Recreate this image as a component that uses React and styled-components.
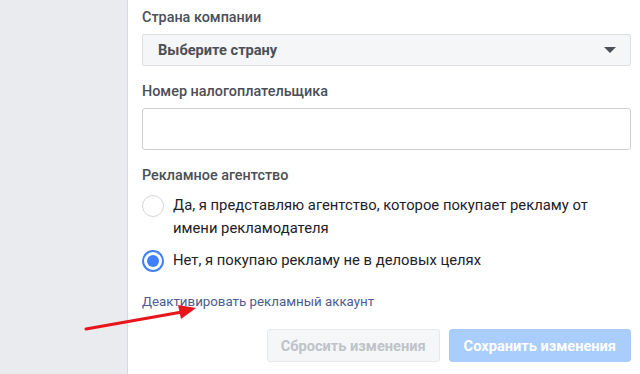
import React from "react";
import styled, { createGlobalStyle } from "styled-components";

const Global = createGlobalStyle`
  html, body { margin: 0; padding: 0; background: #fff; }
  body { font-family: Roboto, "Liberation Sans", Arial, sans-serif; }
  #root { width: 640px; height: 374px; overflow: hidden; }
`;

const Page = styled.div`
  position: relative;
  display: flex;
  width: 640px;
  height: 374px;
  overflow: hidden;
`;

const Sidebar = styled.div`
  width: 127px;
  flex: none;
  background: #e9ebee;
  border-right: 1px solid #d7dae0;
`;

const Content = styled.div`
  flex: 1;
  display: flex;
  flex-direction: column;
  padding: 9px 9px 0 14px;
`;

const Label = styled.div`
  font-size: 14.4px;
  line-height: 17px;
  font-weight: 500;
  color: #4b4f56;
  margin-bottom: ${(p) => p.$mb || 8}px;
`;

const Select = styled.div`
  height: 30px;
  display: flex;
  align-items: center;
  justify-content: space-between;
  padding: 0 14px 0 15px;
  background: #f5f6f7;
  border: 1px solid #dddfe2;
  border-radius: 2px;
  font-size: 14.6px;
  font-weight: 700;
  color: #4b4f56;
  margin-bottom: 17px;
`;

const Caret = styled.span`
  width: 0;
  height: 0;
  border-left: 6px solid transparent;
  border-right: 6px solid transparent;
  border-top: 6px solid #4b4f56;
`;

const Input = styled.div`
  height: 40px;
  background: #fff;
  border: 1px solid #ccd0d5;
  border-radius: 3px;
  margin-bottom: 17px;
`;

const RadioRow = styled.div`
  display: flex;
  align-items: flex-start;
  gap: 9px;
  margin-top: ${(p) => p.$mt || 0}px;
`;

const Radio = styled.span`
  flex: none;
  box-sizing: border-box;
  width: 22px;
  height: 22px;
  border-radius: 50%;
  border: ${(p) => (p.$checked ? "2px solid #4080ff" : "1px solid #d3d6db")};
  background: #fff;
  display: flex;
  align-items: center;
  justify-content: center;
  margin-top: 1px;
  &::after {
    content: "";
    display: ${(p) => (p.$checked ? "block" : "none")};
    width: 12px;
    height: 12px;
    border-radius: 50%;
    background: #4080ff;
  }
`;

const RadioText = styled.div`
  font-size: 14.8px;
  line-height: 23px;
  color: #1d2129;
`;

const Link = styled.a`
  font-size: 13.3px;
  line-height: 17px;
  color: #4b5c91;
  text-decoration: none;
  margin-top: 21px;
  align-self: flex-start;
`;

const Actions = styled.div`
  display: flex;
  justify-content: flex-end;
  gap: 9px;
  margin-top: 19px;
`;

const Button = styled.button`
  height: 33px;
  box-sizing: border-box;
  padding: 0 ${(p) => (p.$primary ? 14 : 13)}px;
  font-family: inherit;
  font-size: 14.6px;
  font-weight: 700;
  border-radius: 3px;
  border: 1px solid ${(p) => (p.$primary ? "#a9cbfd" : "#e6e8eb")};
  background: ${(p) => (p.$primary ? "#a9cdfd" : "#f5f6f7")};
  color: ${(p) => (p.$primary ? "#fff" : "#bec3c9")};
`;

const Arrow = styled.svg`
  position: absolute;
  left: 0;
  top: 0;
  pointer-events: none;
`;

export default function App() {
  return (
    <Page>
      <Global />
      <Sidebar />
      <Content>
        <Label>Страна компании</Label>
        <Select>
          Выберите страну
          <Caret />
        </Select>
        <Label>Номер налогоплательщика</Label>
        <Input />
        <Label $mb={6}>Рекламное агентство</Label>
        <RadioRow $mt={4}>
          <Radio />
          <RadioText>
            Да, я представляю агентство, которое покупает рекламу от
            <br />
            имени рекламодателя
          </RadioText>
        </RadioRow>
        <RadioRow $mt={9}>
          <Radio $checked />
          <RadioText>Нет, я покупаю рекламу не в деловых целях</RadioText>
        </RadioRow>
        <Link href="#">Деактивировать рекламный аккаунт</Link>
        <Actions>
          <Button>Сбросить изменения</Button>
          <Button $primary>Сохранить изменения</Button>
        </Actions>
      </Content>
      <Arrow width="640" height="374" viewBox="0 0 640 374">
        <line x1="86" y1="329" x2="182" y2="312" stroke="#e8151b" strokeWidth="3" strokeLinecap="round" />
        <polygon points="196,308 178,305 181,319" fill="#e8151b" />
      </Arrow>
    </Page>
  );
}
